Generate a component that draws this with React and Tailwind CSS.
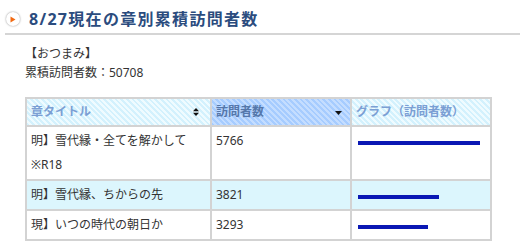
import React from "react";

const rows = [
  { title: ["明】雪代縁・全てを解かして", "※R18"], count: 5766, bg: "bg-white" },
  { title: ["明】雪代縁、ちからの先"], count: 3821, bg: "bg-[#dcf6fd]" },
  { title: ["現】いつの時代の朝日か"], count: 3293, bg: "bg-white" },
];

export default function App() {
  return (
    <div
      className="w-[520px] h-[243px] overflow-hidden bg-white text-[#333333] text-[12px]"
      style={{ fontFamily: '"Noto Sans", "Noto Sans CJK JP", sans-serif' }}
    >
      <div className="ml-[5px] pt-[5px] h-[35px] flex items-center border-b-2 border-[#d5d5d5]">
        <div className="ml-[1px] w-[14px] h-[14px] rounded-full bg-white shadow-[0_0_2px_rgba(0,0,0,0.45)] flex items-center justify-center">
          <svg width="6" height="7" viewBox="0 0 6 7">
            <polygon points="0.5,0.5 5.5,3.5 0.5,6.5" fill="#f26a12" />
          </svg>
        </div>
        <div className="ml-[9px] text-[16px] font-bold leading-[20px] tracking-[1.3px] text-[#2b4c7e]">
          8/27現在の章別累積訪問者数
        </div>
      </div>

      <div className="pl-[25px] pt-[9px]">
        <div className="leading-[19px]">【おつまみ】</div>
        <div className="leading-[19px]">累積訪問者数：50708</div>

        <table className="mt-[15px] w-[467px] border-separate border-spacing-0 border-l-2 border-t-2 border-[#d3d3d3] table-fixed">
          <colgroup>
            <col className="w-[185px]" />
            <col className="w-[140px]" />
            <col className="w-[140px]" />
          </colgroup>
          <thead>
            <tr>
              <th className="h-[28px] p-0 border-r-2 border-b-2 border-[#d3d3d3] bg-[image:repeating-linear-gradient(45deg,#d3f1fd_0px,#d3f1fd_2px,#effbff_2px,#effbff_4px)] text-left font-bold text-[#7b9fd4]">
                <div className="flex items-center justify-between pl-[4px] pr-[11px]">
                  <span>章タイトル</span>
                  <svg width="6" height="8" viewBox="0 0 6 8">
                    <polygon points="3,0 6,3.2 0,3.2" fill="#111" />
                    <polygon points="0,4.8 6,4.8 3,8" fill="#111" />
                  </svg>
                </div>
              </th>
              <th className="h-[28px] p-0 border-r-2 border-b-2 border-[#d3d3d3] bg-[image:repeating-linear-gradient(45deg,#a6ccff_0px,#a6ccff_2px,#c4ddff_2px,#c4ddff_4px)] text-left font-bold text-[#5577aa]">
                <div className="flex items-center justify-between pl-[4px] pr-[8px]">
                  <span>訪問者数</span>
                  <svg width="7" height="4" viewBox="0 0 7 4" className="mt-[2px]">
                    <polygon points="0,0 7,0 3.5,4" fill="#111" />
                  </svg>
                </div>
              </th>
              <th className="h-[28px] p-0 border-r-2 border-b-2 border-[#d3d3d3] bg-[image:repeating-linear-gradient(45deg,#d3f1fd_0px,#d3f1fd_2px,#effbff_2px,#effbff_4px)] text-left font-bold text-[#7b9fd4]">
                <div className="pl-[4px]">グラフ（訪問者数）</div>
              </th>
            </tr>
          </thead>
          <tbody>
            {rows.map((r, i) => (
              <tr key={i} className={r.bg}>
                <td className="align-top px-[4px] py-[2px] leading-[24px] border-r-2 border-b-2 border-[#d3d3d3]">
                  {r.title.map((t, j) => (
                    <div key={j}>{t}</div>
                  ))}
                </td>
                <td className="align-top px-[4px] py-[2px] leading-[24px] border-r-2 border-b-2 border-[#d3d3d3]">
                  {r.count}
                </td>
                <td className="align-top pl-[6px] pt-[14px] border-r-2 border-b-2 border-[#d3d3d3]">
                  <div
                    className="h-[4px] bg-[#0a18b4]"
                    style={{ width: `${Math.round(r.count * 0.02116)}px` }}
                  />
                </td>
              </tr>
            ))}
          </tbody>
        </table>
      </div>
    </div>
  );
}
